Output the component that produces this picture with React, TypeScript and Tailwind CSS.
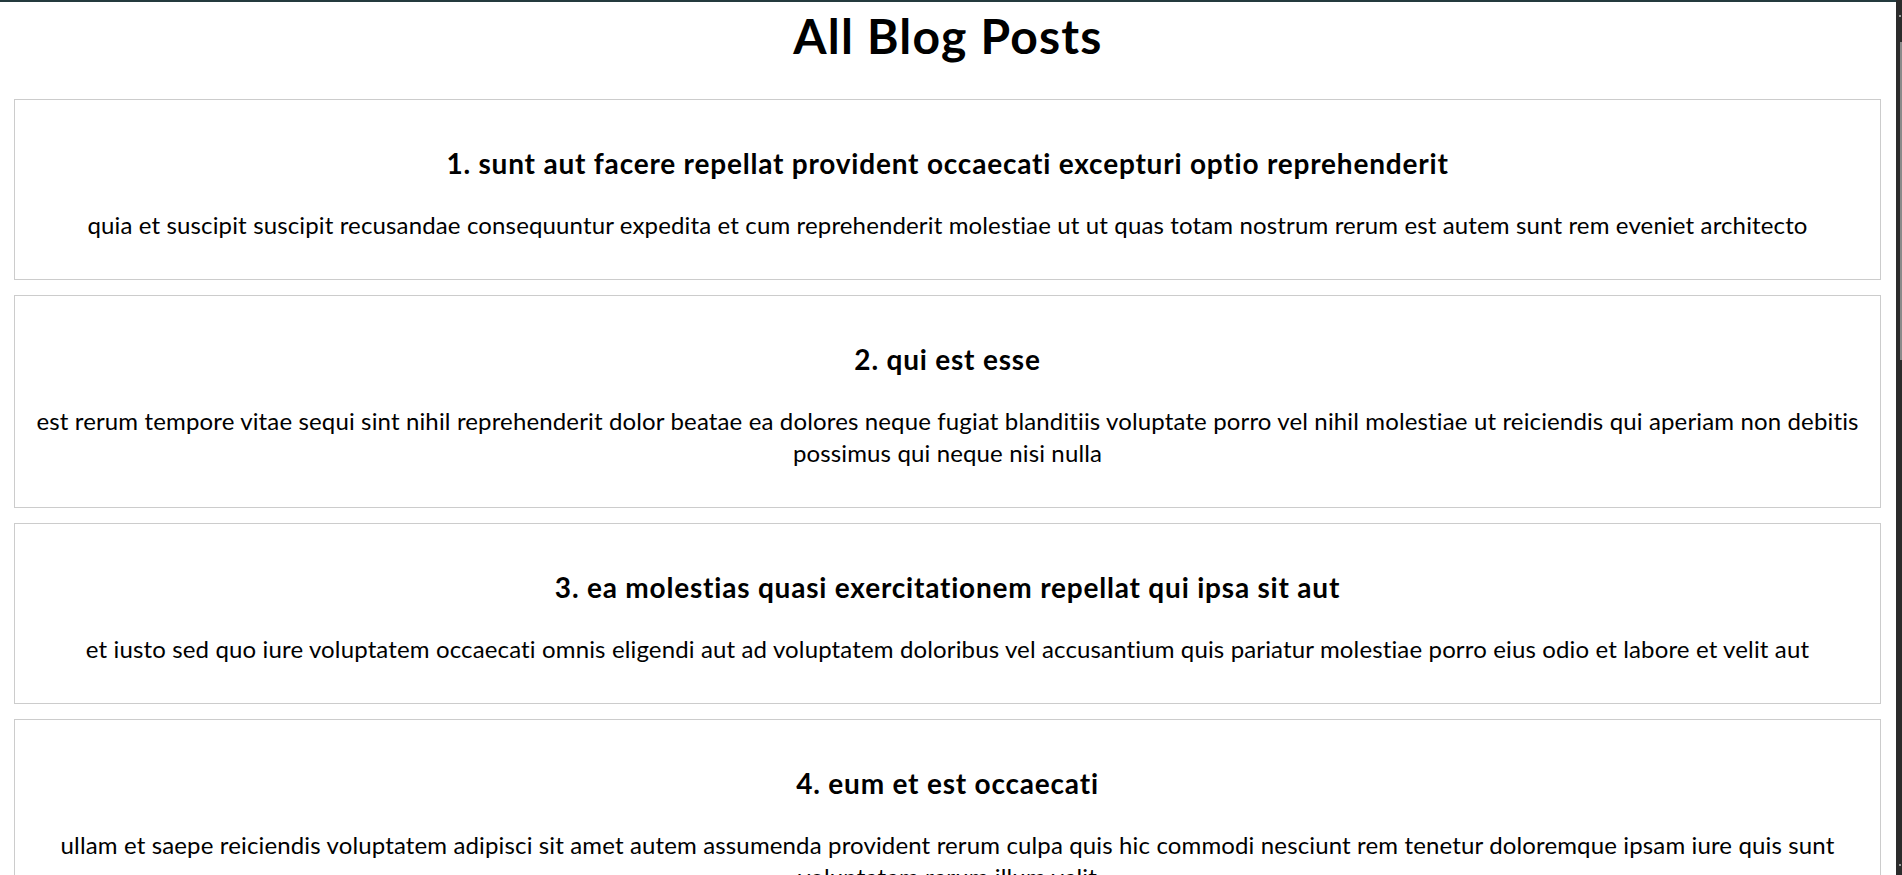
import React from "react";

type Post = { id: number; title: string; lines: string[] };

const posts: Post[] = [
  {
    id: 1,
    title: "sunt aut facere repellat provident occaecati excepturi optio reprehenderit",
    lines: [
      "quia et suscipit suscipit recusandae consequuntur expedita et cum reprehenderit molestiae ut ut quas totam nostrum rerum est autem sunt rem eveniet architecto",
    ],
  },
  {
    id: 2,
    title: "qui est esse",
    lines: [
      "est rerum tempore vitae sequi sint nihil reprehenderit dolor beatae ea dolores neque fugiat blanditiis voluptate porro vel nihil molestiae ut reiciendis qui aperiam non debitis",
      "possimus qui neque nisi nulla",
    ],
  },
  {
    id: 3,
    title: "ea molestias quasi exercitationem repellat qui ipsa sit aut",
    lines: [
      "et iusto sed quo iure voluptatem occaecati omnis eligendi aut ad voluptatem doloribus vel accusantium quis pariatur molestiae porro eius odio et labore et velit aut",
    ],
  },
  {
    id: 4,
    title: "eum et est occaecati",
    lines: [
      "ullam et saepe reiciendis voluptatem adipisci sit amet autem assumenda provident rerum culpa quis hic commodi nesciunt rem tenetur doloremque ipsam iure quis sunt",
      "voluptatem rerum illum velit",
    ],
  },
];

function PostCard({ post }: { post: Post }) {
  return (
    <div className="border border-[#cccccc] p-[15px] text-center">
      <h3 className="mt-[30px] mb-[27px] text-[28px] font-bold leading-[37px] tracking-[0.8px] text-black">
        {post.id}. {post.title}
      </h3>
      <p className="mt-0 mb-[23px] text-[24px] leading-[32px] tracking-[0.14px] text-black">
        {post.lines.map((line, i) => (
          <span key={i} className="block whitespace-nowrap">
            {line}
          </span>
        ))}
      </p>
    </div>
  );
}

export default function App() {
  return (
    <div
      className="flex h-[875px] w-[1902px] overflow-hidden bg-white [font-variant-ligatures:none]"
      style={{ fontFamily: "Lato, 'Open Sans', sans-serif" }}
    >
      <div className="flex min-w-0 flex-1 flex-col">
        <div className="h-[2px] w-full shrink-0 bg-[#243a3e]" />
        <h1 className="mt-[2px] mb-[31px] text-center text-[48px] font-bold leading-[64px] tracking-[1.2px] text-black">
          All Blog Posts
        </h1>
        <div className="ml-[14px] mr-[15px] flex flex-col gap-[15px]">
          {posts.map((p) => (
            <PostCard key={p.id} post={p} />
          ))}
        </div>
      </div>
      <div className="flex w-[6px] shrink-0 flex-col items-end bg-[#2b2b2b]">
        <div className="mt-[15px] mr-[1px] h-[2px] w-[2px] bg-[#9a9a9a]" />
        <div className="mt-[25px] h-[318px] w-[2px] bg-[#8a8a8a]" />
        <div className="mt-auto mb-[9px] mr-[1px] h-[2px] w-[2px] bg-[#9a9a9a]" />
      </div>
    </div>
  );
}
